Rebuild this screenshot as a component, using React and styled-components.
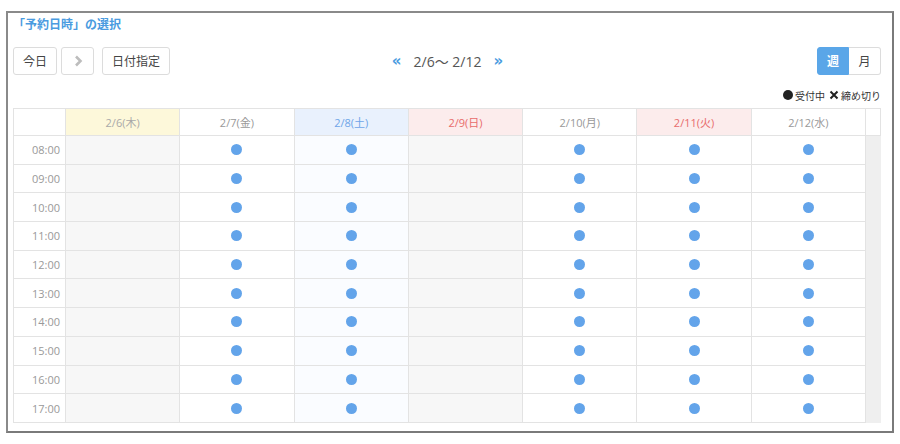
import React, { useState } from "react";
import styled, { createGlobalStyle } from "styled-components";

const GlobalStyle = createGlobalStyle`
  body {
    margin: 0;
    background: #fff;
    font-family: "Open Sans", "Noto Sans CJK JP", sans-serif;
  }
`;

const Frame = styled.div`
  box-sizing: border-box;
  width: 888px;
  margin: 11px 0 0 6px;
  border: 2px solid #7a7a7a;
  border-left-color: #8a8a8a;
  border-top-color: #8a8a8a;
  padding: 4px 10px 8px 5px;
  background: #fff;
`;

const Title = styled.div`
  height: 16px;
  line-height: 16px;
  font-size: 12px;
  font-weight: bold;
  color: #4a9be0;
`;

const Toolbar = styled.div`
  display: grid;
  grid-template-columns: 1fr auto 1fr;
  align-items: center;
  margin-top: 14px;
  height: 28px;
`;

const Group = styled.div`
  display: flex;
  justify-content: ${(p) => (p.right ? "flex-end" : "flex-start")};
  padding-right: ${(p) => (p.right ? 1 : 0)}px;
`;

const Btn = styled.button`
  box-sizing: border-box;
  height: 28px;
  min-width: ${(p) => p.w || 32}px;
  padding: 0 ${(p) => p.px || 9}px;
  margin-right: ${(p) => p.mr || 0}px;
  border: 1px solid #dcdcdc;
  border-radius: 3px;
  background: #fff;
  color: #444;
  font-family: inherit;
  font-size: 12px;
  display: flex;
  align-items: center;
  justify-content: center;
`;

const Toggle = styled.div`
  display: flex;
`;

const ToggleBtn = styled.button`
  box-sizing: border-box;
  width: 32px;
  height: 28px;
  border: 1px solid ${(p) => (p.active ? "#5aa6e8" : "#dcdcdc")};
  background: ${(p) => (p.active ? "#5aa6e8" : "#fff")};
  color: ${(p) => (p.active ? "#fff" : "#444")};
  font-family: inherit;
  font-size: 12px;
  font-weight: ${(p) => (p.active ? "bold" : "normal")};
  border-radius: ${(p) => (p.first ? "3px 0 0 3px" : "0 3px 3px 0")};
  border-left-width: ${(p) => (p.first ? 1 : 0)}px;
  padding: 0;
`;

const Range = styled.div`
  display: flex;
  align-items: center;
  gap: 12px;
  font-size: 14px;
  color: #555;
`;

const Arrow = styled.span`
  color: #4a9be0;
  font-size: 15px;
  font-weight: bold;
  font-family: "DejaVu Sans", sans-serif;
  line-height: 1;
`;

const Legend = styled.div`
  display: flex;
  justify-content: flex-end;
  align-items: center;
  gap: 4px;
  margin-top: 12px;
  height: 16px;
  font-size: 10px;
  color: #333;
  padding-right: 1px;
`;

const LegendItem = styled.span`
  display: flex;
  align-items: center;
  gap: 2px;
`;

const BlackDot = styled.span`
  width: 10px;
  height: 10px;
  border-radius: 50%;
  background: #222;
  display: inline-block;
`;

const Grid = styled.div`
  margin-top: 5px;
  display: grid;
  grid-template-columns: 52px repeat(7, 1fr) 15px;
  grid-template-rows: 27px repeat(10, 28.7px);
  width: 868px;
  border-left: 1px solid #e3e3e3;
  border-top: 1px solid #e3e3e3;
  box-sizing: border-box;
`;

const Cell = styled.div`
  box-sizing: border-box;
  border-right: 1px solid #e3e3e3;
  border-bottom: 1px solid #e3e3e3;
  background: ${(p) => p.bg || "#fff"};
  display: flex;
  align-items: center;
  justify-content: center;
`;

const HeadCell = styled(Cell)`
  font-size: 11px;
  color: ${(p) => p.color || "#999"};
`;

const TimeCell = styled(Cell)`
  justify-content: flex-end;
  padding-right: 5px;
  font-size: 11px;
  color: #999;
`;

const Track = styled.div`
  grid-column: 9;
  grid-row: 2 / span 10;
  background: #efefef;
`;

const Dot = styled.span`
  width: 11px;
  height: 11px;
  border-radius: 50%;
  background: #63a4ea;
`;

const days = [
  { label: "2/6(木)", head: "#fdf8da", color: "#a9a9a9", body: "#f7f7f7", open: false },
  { label: "2/7(金)", head: "#fff", color: "#999", body: "#fff", open: true },
  { label: "2/8(土)", head: "#e9f1fd", color: "#6ea5e8", body: "#fafcff", open: true },
  { label: "2/9(日)", head: "#fcecec", color: "#e86b6b", body: "#f7f7f7", open: false },
  { label: "2/10(月)", head: "#fff", color: "#999", body: "#fff", open: true },
  { label: "2/11(火)", head: "#fcecec", color: "#e86b6b", body: "#fff", open: true },
  { label: "2/12(水)", head: "#fff", color: "#999", body: "#fff", open: true },
];

const times = ["08:00", "09:00", "10:00", "11:00", "12:00", "13:00", "14:00", "15:00", "16:00", "17:00"];

const Chevron = () => (
  <svg width="10" height="12" viewBox="0 0 10 12">
    <path d="M3 1.5 L7.5 6 L3 10.5" fill="none" stroke="#bdbdbd" strokeWidth="2.6" />
  </svg>
);

const App = () => {
  const [mode, setMode] = useState("week");

  return (
    <>
      <GlobalStyle />
      <Frame>
        <Title>「予約日時」の選択</Title>
        <Toolbar>
          <Group>
            <Btn w={44} mr={4}>今日</Btn>
            <Btn w={33} mr={8} px={0}>
              <Chevron />
            </Btn>
            <Btn w={67}>日付指定</Btn>
          </Group>
          <Range>
            <Arrow>«</Arrow>
            <span>2/6〜 2/12</span>
            <Arrow>»</Arrow>
          </Range>
          <Group right>
            <Toggle>
              <ToggleBtn first active={mode === "week"} onClick={() => setMode("week")}>
                週
              </ToggleBtn>
              <ToggleBtn active={mode === "month"} onClick={() => setMode("month")}>
                月
              </ToggleBtn>
            </Toggle>
          </Group>
        </Toolbar>
        <Legend>
          <LegendItem>
            <BlackDot />
            受付中
          </LegendItem>
          <LegendItem>
            <svg width="10" height="10" viewBox="0 0 10 10">
              <path d="M1.5 1.5 L8.5 8.5 M8.5 1.5 L1.5 8.5" stroke="#222" strokeWidth="2" />
            </svg>
            締め切り
          </LegendItem>
        </Legend>
        <Grid>
          <HeadCell />
          {days.map((d) => (
            <HeadCell key={d.label} bg={d.head} color={d.color}>
              {d.label}
            </HeadCell>
          ))}
          <HeadCell />
          {times.map((t) => (
            <React.Fragment key={t}>
              <TimeCell>{t}</TimeCell>
              {days.map((d) => (
                <Cell key={d.label} bg={d.body}>
                  {d.open && <Dot />}
                </Cell>
              ))}
            </React.Fragment>
          ))}
          <Track />
        </Grid>
      </Frame>
    </>
  );
};

export default App;
